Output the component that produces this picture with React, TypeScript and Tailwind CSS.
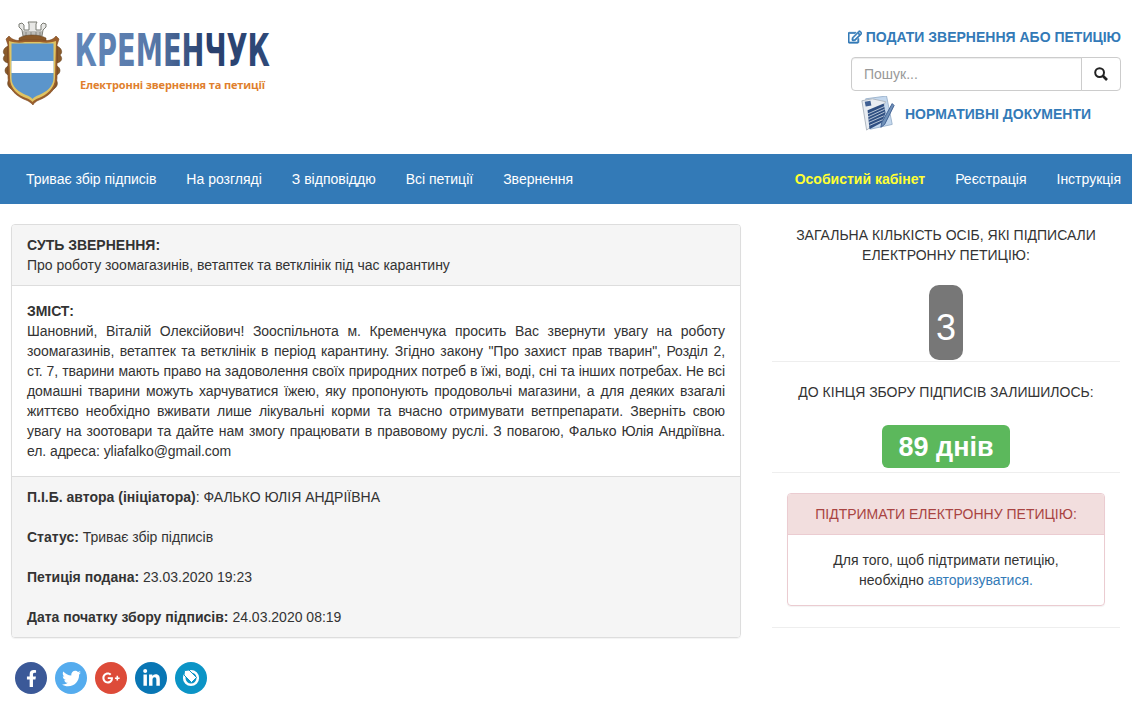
import { FaFacebookF, FaGooglePlusG, FaLinkedinIn, FaRegEdit, FaTwitter } from 'react-icons/fa';

function Crest() {
  return (
    <svg width="64" height="86" viewBox="0 0 64 86" className="shrink-0">
      {/* crown */}
      <g fill="#e8e8e6" stroke="#7b7c74" strokeWidth="1">
        <path d="M18 4 L21 3 L23 5 L23 10 L28 10 L28 4 L27 2 L36 2 L35 4 L35 10 L40 10 L40 5 L42 3 L45 4 L45 7 L42 10 L41 16 L22 16 L21 10 L18 7 Z" />
        <path d="M22 12 H41 M22 14 H41 M25 12 V16 M30 12 V16 M35 12 V16 M39 12 V16" fill="none" strokeWidth="0.8" />
      </g>
      {/* side ornaments */}
      <g fill="#8a5a2a" stroke="#5c3d1c" strokeWidth="0.5">
        <path d="M7 26 C2 28 1 33 4 35 C1 38 2 42 7 43 Z" />
        <path d="M7 46 C3 48 3 53 7 55 Z" />
        <path d="M8 60 C5 63 7 68 12 70 Z" />
        <path d="M56 26 C61 28 62 33 59 35 C62 38 61 42 56 43 Z" />
        <path d="M56 46 C60 48 60 53 56 55 Z" />
        <path d="M55 60 C58 63 56 68 51 70 Z" />
        <path d="M18 18 C24 14 38 14 45 18 L45 21 L18 21 Z" />
      </g>
      {/* frame */}
      <path
        d="M5 19 L8 16 C12 21 18 21 22 20 L41 20 C46 21 51 21 55 16 L58 19 L56 25 L56 58 C56 70 46 77 38 80 C35 81 33 83 32 85 C30 83 28 81 25 80 C17 77 7 70 7 58 L7 25 Z"
        fill="#9b5f2c"
        stroke="#7a4a22"
        strokeWidth="0.6"
      />
      <path d="M8 21 C14 23 20 23 24 22 L39 22 C44 23 49 23 55 21 L54 58 C54 69 45 75 38 78 C35 79 33 80 31.500 82 C30 80 28 79 25 78 C17 75 9 69 9 58 Z" fill="#e0c463" />
      {/* shield */}
      <path d="M10.500 23.500 L52.500 23.500 L52.500 58 C52.500 67 45 72 38 75 C35 76 33 77 31.500 79 C30 77 28 76 25 75 C18 72 10.500 67 10.500 58 Z" fill="#5b95cb" />
      <rect x="10.500" y="41" width="42" height="12" fill="#ffffff" />
    </svg>
  );
}

function Logo() {
  return (
    <div className="flex items-start pl-[1px] pt-[20px]">
      <Crest />
      <div className="ml-[9px] flex flex-col pt-[4px]">
        <svg width="197" height="54" viewBox="0 0 317 54" preserveAspectRatio="none">
          <defs>
            <linearGradient id="kremGrad" x1="0" x2="317" y1="0" y2="0" gradientUnits="userSpaceOnUse">
              <stop offset="0" stopColor="#6288ba" />
              <stop offset="0.4" stopColor="#5878a8" />
              <stop offset="0.68" stopColor="#283f6c" />
              <stop offset="1" stopColor="#2f4a7a" />
            </linearGradient>
          </defs>
          <text
            x="1"
            y="42"
            fontFamily="'DejaVu Sans', sans-serif"
            fontWeight="700"
            fontSize="44"
            fill="url(#kremGrad)"
          >
            КРЕМЕНЧУК
          </text>
        </svg>
        <div className="-mt-px ml-[6px] font-['Open_Sans',sans-serif] text-[11px] leading-[16px] font-bold tracking-[-0.13px] whitespace-nowrap text-[#e07f2d]">
          Електронні звернення та петиції
        </div>
      </div>
    </div>
  );
}

function DocIcon() {
  return (
    <svg width="36" height="36" viewBox="0 0 36 38" className="shrink-0">
      <path d="M5 3 L27 0 L33 30 L10 35 Z" fill="#c4d8ee" stroke="#9db4cd" />
      <path d="M1 5 L12 3 L26 6 L14 30 L6 36 Z" fill="#e9edf2" stroke="#aeb6bf" />
      <path d="M4 6 L10 5 L11 10 L5 11 Z" fill="#3f5f92" />
      <path d="M7 15 L24 8 L26 18 L22 28 L9 35 Z" fill="#2f4f82" />
      <g stroke="#dfe7f0" strokeWidth="0.8">
        <path d="M7 19 L25 11" />
        <path d="M7.500 22 L25 14" />
        <path d="M8 25 L25 17" />
        <path d="M8 28 L24 21" />
        <path d="M9 31 L23 25" />
      </g>
      <path d="M33 8 L35 10 L25 30 L21 33 L22 28 Z" fill="#6f90b8" stroke="#3f5f92" />
    </svg>
  );
}

function TagIcon() {
  return (
    <svg width="32" height="32" viewBox="0 0 32 32">
      <circle cx="16" cy="16" r="6.8" fill="none" stroke="#fff" strokeWidth="2.6" />
      <path d="M9.500 8.500 L14 8 L21.500 15.500 L16.500 20.500 L9 13 Z" fill="#fff" stroke="#0b94c6" strokeWidth="1" />
    </svg>
  );
}

const leftNav = ['Триває збір підписів', 'На розгляді', 'З відповіддю', 'Всі петиції', 'Звернення'];

const socials = [
  { key: 'fb', bg: 'bg-[#3b5998]', icon: <FaFacebookF className="h-[17px] w-[17px]" /> },
  { key: 'tw', bg: 'bg-[#55acee]', icon: <FaTwitter className="h-[19px] w-[19px]" /> },
  { key: 'gp', bg: 'bg-[#dd4b39]', icon: <FaGooglePlusG className="h-[18px] w-[18px]" /> },
  { key: 'li', bg: 'bg-[#0976b4]', icon: <FaLinkedinIn className="h-[19px] w-[19px]" /> },
  { key: 'tg', bg: 'bg-[#0b94c6]', icon: <TagIcon /> },
];

export default function App() {
  return (
    <div className="min-h-[707px] bg-white font-['Liberation_Sans',Arial,sans-serif] text-[14px] leading-[20px] text-[#333]">
      {/* Header */}
      <header className="flex h-[154px] justify-between">
        <Logo />
        <div className="flex w-[281px] flex-col items-end pt-[27px] pr-[11px]">
          <a className="flex h-[20px] items-center gap-[4px] font-bold whitespace-nowrap text-[#337ab7]">
            <FaRegEdit className="h-[14px] w-[14px]" stroke="currentColor" strokeWidth={28} />
            ПОДАТИ ЗВЕРНЕННЯ АБО ПЕТИЦІЮ
          </a>
          <div className="mt-[10px] flex h-[34px] w-[270px]">
            <div className="flex flex-1 items-center rounded-l-[4px] border border-[#ccc] px-[12px] text-[#999] shadow-[inset_0_1px_1px_rgba(0,0,0,0.075)]">
              Пошук...
            </div>
            <div className="-ml-px flex w-[40px] items-center justify-center rounded-r-[4px] border border-[#ccc]">
              <svg width="14" height="14" viewBox="0 0 14 14" fill="none" stroke="#222" strokeWidth="2">
                <circle cx="5.6" cy="5.6" r="4.4" />
                <path d="M9 9 L13 13" strokeWidth="2.6" />
              </svg>
            </div>
          </div>
          <div className="mt-[5px] ml-[9px] flex w-[261px] items-center gap-[9px] self-start">
            <DocIcon />
            <a className="font-bold whitespace-nowrap text-[#337ab7]">НОРМАТИВНІ ДОКУМЕНТИ</a>
          </div>
        </div>
      </header>

      {/* Nav */}
      <nav className="flex h-[50px] items-center justify-between bg-[#337ab7] pr-[11px] pl-[26px] text-white">
        <div className="flex gap-[30px]">
          {leftNav.map((item) => (
            <a key={item}>{item}</a>
          ))}
        </div>
        <div className="flex gap-[30px]">
          <a className="font-bold text-[#ffff33]">Особистий кабінет</a>
          <a>Реєстрація</a>
          <a>Інструкція</a>
        </div>
      </nav>

      <main className="flex pt-[20px] pl-[11px]">
        {/* Left column */}
        <div className="w-[730px] shrink-0">
          <div className="overflow-hidden rounded-[4px] border border-[#ddd] shadow-[0_1px_1px_rgba(0,0,0,0.05)]">
            <div className="border-b border-[#ddd] bg-[#f5f5f5] px-[15px] py-[10px]">
              <div className="font-bold">СУТЬ ЗВЕРНЕННЯ:</div>
              <div>Про роботу зоомагазинів, ветаптек та ветклінік під час карантину</div>
            </div>
            <div className="p-[15px] text-justify tracking-[-0.06px]">
              <div className="font-bold">ЗМІСТ:</div>
              Шановний, Віталій Олексійович! Зооспільнота м. Кременчука просить Вас звернути увагу на роботу зоомагазинів, ветаптек та ветклінік в період карантину. Згідно закону "Про захист прав тварин", Розділ 2, ст.&nbsp;7, тварини мають право на задоволення своїх природних потреб в їжі, воді, сні та інших потребах. Не всі домашні тварини можуть харчуватися їжею, яку пропонують продовольчі магазини, а для деяких взагалі життєво необхідно вживати лише лікувальні корми та вчасно отримувати ветпрепарати. Зверніть свою увагу на зоотовари та дайте нам змогу працювати в правовому руслі. З повагою, Фалько Юлія Андріївна. ел. адреса: yliafalko@gmail.com
            </div>
            <div className="flex flex-col gap-[20px] border-t border-[#ddd] bg-[#f5f5f5] px-[15px] py-[10px]">
              <div>
                <b>П.І.Б. автора (ініціатора)</b>: ФАЛЬКО ЮЛІЯ АНДРІЇВНА
              </div>
              <div>
                <b>Статус:</b> Триває збір підписів
              </div>
              <div>
                <b>Петиція подана:</b> 23.03.2020 19:23
              </div>
              <div>
                <b>Дата початку збору підписів:</b> 24.03.2020 08:19
              </div>
            </div>
          </div>
          <div className="mt-[24px] flex gap-[8px] pl-[4px]">
            {socials.map((s) => (
              <a key={s.key} className={`flex h-[32px] w-[32px] items-center justify-center rounded-full text-white ${s.bg}`}>
                {s.icon}
              </a>
            ))}
          </div>
        </div>

        {/* Right column */}
        <aside className="ml-[31px] w-[348px] shrink-0 pt-px text-center">
          <div>
            ЗАГАЛЬНА КІЛЬКІСТЬ ОСІБ, ЯКІ ПІДПИСАЛИ
            <br />
            ЕЛЕКТРОННУ ПЕТИЦІЮ:
          </div>
          <div className="mt-[20px] flex justify-center border-b border-[#eee] pb-px">
            <span className="flex h-[75px] w-[34px] items-center justify-center rounded-[10px] bg-[#777] pt-[10px] text-[36px] text-white">3</span>
          </div>
          <div className="mt-[20px]">ДО КІНЦЯ ЗБОРУ ПІДПИСІВ ЗАЛИШИЛОСЬ:</div>
          <div className="mt-[23px] flex justify-center border-b border-[#eee] pb-[4px]">
            <span className="flex h-[43px] w-[128px] items-center justify-center rounded-[6px] bg-[#5cb85c] text-[27px] font-bold text-white">89 днів</span>
          </div>
          <div className="border-b border-[#eee] px-[15px] pt-[20px] pb-[21px]">
            <div className="overflow-hidden rounded-[4px] border border-[#ebccd1] shadow-[0_1px_1px_rgba(0,0,0,0.05)]">
              <div className="flex h-[41px] items-center justify-center border-b border-[#ebccd1] bg-[#f2dede] text-[#a94442]">
                ПІДТРИМАТИ ЕЛЕКТРОННУ ПЕТИЦІЮ:
              </div>
              <div className="px-[15px] py-[15px]">
                Для того, щоб підтримати петицію,
                <br />
                необхідно <a className="text-[#337ab7]">авторизуватися.</a>
              </div>
            </div>
          </div>
        </aside>
      </main>
    </div>
  );
}
